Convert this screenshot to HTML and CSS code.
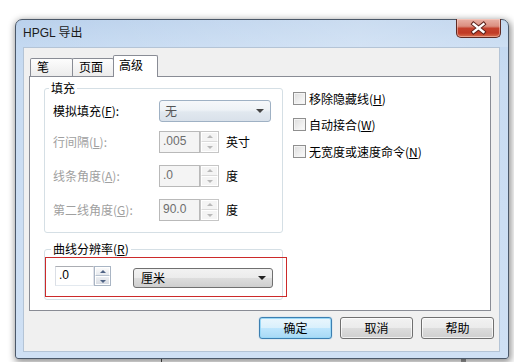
FILE: index.html
```html
<!DOCTYPE html>
<html lang="zh-CN">
<head>
<meta charset="utf-8">
<title>HPGL 导出</title>
<link rel="stylesheet" href="styles.css">
</head>
<body>
<div class="desk-line line-a"></div>
<div class="desk-line line-b"></div>
<div class="window">
  <div class="titlebar">
    <span class="title">HPGL 导出</span>
    <div class="close">
      <svg width="43" height="18" viewBox="0 0 43 18">
        <path d="M16.5 5 L26.5 13 M26.5 5 L16.5 13" stroke="#5e231c" stroke-width="4.2" stroke-linecap="square" fill="none"/>
        <path d="M16.5 5 L26.5 13 M26.5 5 L16.5 13" stroke="#ffffff" stroke-width="2.3" stroke-linecap="square" fill="none"/>
      </svg>
    </div>
  </div>
  <div class="client">
    <div class="tabs">
      <div class="tab t1">笔</div>
      <div class="tab t2">页面</div>
      <div class="tab t3 active">高级</div>
    </div>
    <div class="panel">
      <div class="left">
        <fieldset class="group g1">
          <legend>填充</legend>
          <div class="row r1">
            <span class="lbl">模拟填充(<u>F</u>):</span>
            <div class="combo combo-fill"><span class="ctext">无</span><i class="arrow"></i></div>
          </div>
          <div class="row r2 disabled">
            <span class="lbl">行间隔(<u>L</u>):</span>
            <div class="spin">
              <div class="field">.005</div>
              <div class="spinbtns"><span class="sb up"><i></i></span><span class="sb dn"><i></i></span></div>
            </div>
            <span class="unit">英寸</span>
          </div>
          <div class="row r3 disabled">
            <span class="lbl">线条角度(<u>A</u>):</span>
            <div class="spin">
              <div class="field">.0</div>
              <div class="spinbtns"><span class="sb up"><i></i></span><span class="sb dn"><i></i></span></div>
            </div>
            <span class="unit">度</span>
          </div>
          <div class="row r3 disabled">
            <span class="lbl">第二线角度(<u>G</u>):</span>
            <div class="spin">
              <div class="field">90.0</div>
              <div class="spinbtns"><span class="sb up"><i></i></span><span class="sb dn"><i></i></span></div>
            </div>
            <span class="unit">度</span>
          </div>
        </fieldset>
        <fieldset class="group g2">
          <legend>曲线分辨率(<u>R</u>)</legend>
          <div class="row res">
            <div class="spin small">
              <div class="field">.0</div>
              <div class="spinbtns"><span class="sb up"><i></i></span><span class="sb dn"><i></i></span></div>
            </div>
            <div class="combo combo-unit"><span class="ctext">厘米</span><i class="arrow"></i></div>
          </div>
        </fieldset>
      </div>
      <div class="checks">
        <div class="check c1"><span class="box"></span><span>移除隐藏线(<u>H</u>)</span></div>
        <div class="check c2"><span class="box"></span><span>自动接合(<u>W</u>)</span></div>
        <div class="check c3"><span class="box"></span><span>无宽度或速度命令(<u>N</u>)</span></div>
      </div>
      <div class="annot"></div>
    </div>
    <div class="buttons">
      <div class="btn default">确定</div>
      <div class="btn">取消</div>
      <div class="btn">帮助</div>
    </div>
  </div>
</div>
</body>
</html>
```
FILE: styles.css
```css
* { box-sizing: border-box; }
html, body { margin: 0; padding: 0; }
body {
  width: 514px;
  height: 362px;
  background: #ffffff;
  position: relative;
  overflow: hidden;
  font-family: "Liberation Sans", "Noto Sans CJK SC", sans-serif;
  font-size: 12px;
  color: #000;
}
u { text-decoration: underline; text-underline-offset: 1px; }

.desk-line { position: absolute; top: 330px; height: 32px; }
.line-a { left: 161px; width: 1px; background: #4a4a4a; }
.line-b { left: 461px; width: 5px; background: #9a9a9a; }

.window {
  position: absolute;
  left: 15px;
  top: 19px;
  width: 494px;
  height: 340px;
  border: 1px solid #4b5869;
  border-radius: 7px 7px 3px 3px;
  background: linear-gradient(180deg, #bad1ec 0px, #c4d9f1 26px, #c9dcf2 60px, #cfe0f4 100%);
  box-shadow: 1px 2px 7px 1px rgba(0,0,0,0.45);
  padding: 0 8px 6px 7px;
  display: flex;
  flex-direction: column;
}

.titlebar {
  position: relative;
  height: 27px;
  display: flex;
  align-items: center;
  border-radius: 6px 6px 0 0;
  background: linear-gradient(90deg, rgba(255,255,255,0) 0%, rgba(255,255,255,0.25) 70%, rgba(255,255,255,0.15) 100%);
  margin: 0 -8px 0 -7px;
  padding-left: 7px;
}
.title {
  font-family: "Liberation Sans", "Noto Sans CJK SC", sans-serif;
  font-size: 12px;
  line-height: 14px;
  color: #1b1b1b;
  margin-top: -1px;
}
.close {
  position: absolute;
  top: -1px;
  right: 7px;
  width: 45px;
  height: 19px;
  border: 1px solid #5e2a24;
  border-top: none;
  border-radius: 0 0 5px 5px;
  background: linear-gradient(180deg, #e9b2a6 0%, #db8f80 40%, #c4412c 52%, #c13b26 78%, #d9704f 100%);
  box-shadow: inset 0 0 0 1px rgba(255,220,210,0.45);
}
.close svg { display: block; margin-left: 0; }

.client {
  flex: 1;
  background: #f0f0f0;
  border: 1px solid #b4c4d6;
  padding: 7px 0 0 0;
  display: flex;
  flex-direction: column;
}

.tabs {
  display: flex;
  align-items: flex-end;
  height: 21px;
  margin-left: 6px;
  position: relative;
  z-index: 2;
}
.tab {
  height: 18px;
  border: 1px solid #898c95;
  border-bottom: none;
  border-radius: 2px 2px 0 0;
  background: linear-gradient(180deg, #fdfdfd 0%, #ececec 100%);
  margin-right: -1px;
  line-height: 16px;
  padding-left: 6px;
  font-family: "Noto Sans CJK SC", sans-serif;
  font-size: 12px;
}
.t1 { width: 43px; }
.t2 { width: 42px; }
.t3 { width: 45px; padding-left: 5px; }
.tab.active {
  height: 22px;
  background: #ffffff;
  margin-bottom: -1px;
  line-height: 18px;
}

.panel {
  position: relative;
  z-index: 1;
  margin-left: 5px;
  width: 462px;
  height: 235px;
  border: 1px solid #898c95;
  background: #ffffff;
  padding: 4px 0 0 14px;
  display: grid;
  grid-template-columns: 239px auto;
  column-gap: 10px;
  align-items: start;
}

.left { display: flex; flex-direction: column; }

.group {
  margin: 0;
  border: 1px solid #d5dfe5;
  border-radius: 3px;
  min-width: 0;
  width: 239px;
}
.group legend {
  padding: 0 2px;
  margin-left: -4px;
  line-height: 14px;
  height: 14px;
  font-family: "Noto Sans CJK SC", sans-serif;
  font-size: 12px;
}
.g1 { padding: 5px 0 11px 8px; }
.g2 { padding: 9px 0 12px 10px; margin-top: 9px; }

.row { display: flex; align-items: center; height: 22px; }
.row.r2 { margin-top: 9px; }
.row.r3 { margin-top: 12px; }
.lbl {
  width: 106px;
  font-family: "Noto Sans CJK SC", sans-serif;
  line-height: 14px;
}
.disabled .lbl { color: #a0a0a0; }
.unit { margin-left: 7px; font-family: "Noto Sans CJK SC", sans-serif; line-height: 14px; }

.combo {
  position: relative;
  border-radius: 3px;
  display: flex;
  align-items: center;
}
.combo-fill {
  width: 112px;
  height: 22px;
  border: 1px solid #9fb1c4;
  background: linear-gradient(180deg, #f6f8fa 0%, #eef2f6 45%, #e1e8ef 55%, #d9e1ea 100%);
  padding-left: 5px;
}
.combo-fill .ctext { color: #555; font-family: "Noto Sans CJK SC", sans-serif; line-height: 14px; }
.combo-unit {
  width: 140px;
  height: 20px;
  margin-left: 22px;
  margin-top: 3px;
  border: 1px solid #707070;
  background: linear-gradient(180deg, #f2f2f2 0%, #ebebeb 50%, #dddddd 51%, #cfcfcf 100%);
  padding-left: 7px;
}
.combo-unit .ctext { font-family: "Noto Sans CJK SC", sans-serif; line-height: 14px; }
.arrow {
  position: absolute;
  right: 6px;
  top: 50%;
  margin-top: -2px;
  width: 0; height: 0;
  border-left: 4px solid transparent;
  border-right: 4px solid transparent;
  border-top: 4px solid #222;
}
.combo-fill .arrow { border-top-color: #444; }

.spin { display: flex; height: 22px; }
.spin .field {
  width: 41px;
  height: 22px;
  border: 1px solid #b9b9b9;
  background: #f4f4f4;
  color: #6d6d6d;
  padding: 2px 0 0 3px;
  line-height: 14px;
  font-family: "Liberation Sans", sans-serif;
}
.spinbtns {
  width: 19px;
  height: 22px;
  display: flex;
  flex-direction: column;
  border: 1px solid #c6c6c6;
  background: #f4f4f4;
}
.sb { flex: 1; position: relative; border: 1px solid #ffffff; }
.sb.up { border-bottom: 1px solid #dadada; }
.sb i {
  position: absolute;
  left: 50%;
  top: 50%;
  width: 0; height: 0;
  margin-left: -3px;
  border-left: 3px solid transparent;
  border-right: 3px solid transparent;
}
.sb.up i { border-bottom: 3px solid #b8b8b8; margin-top: -2px; }
.sb.dn i { border-top: 3px solid #b8b8b8; margin-top: -1px; }

.spin.small { height: 20px; }
.spin.small .field {
  width: 39px;
  height: 20px;
  background: #ffffff;
  color: #000;
  border-color: #abadb3 #e2e3ea #e3e9ef #dbdfe6;
  padding-top: 1px;
}
.spin.small .spinbtns {
  width: 17px;
  height: 20px;
  margin-left: 0;
  border-color: #a9b5c4;
  background: linear-gradient(180deg, #f6f6f6, #dedede);
}
.spin.small .sb.up { border-bottom-color: #b8c3d1; background: linear-gradient(180deg, #fafafa, #e6e9ee); }
.spin.small .sb.dn { background: linear-gradient(180deg, #eceef2, #d8dce3); }
.spin.small .sb.up i { border-bottom-color: #4f6384; }
.spin.small .sb.dn i { border-top-color: #4f6384; }

.checks {
  margin-top: 11px;
  display: grid;
  grid-template-rows: 26px 27px 26px;
}
.check {
  display: flex;
  align-items: flex-start;
  gap: 3px;
  font-family: "Noto Sans CJK SC", sans-serif;
  line-height: 13px;
}
.box {
  width: 13px;
  height: 13px;
  border: 1px solid #8f8f8f;
  background: linear-gradient(135deg, #dcdcdc 0%, #f0f0f0 60%, #fbfbfb 100%);
  box-shadow: inset 0 0 0 1px #f4f4f4;
  flex: none;
}

.annot {
  position: absolute;
  left: 15px;
  top: 180px;
  width: 242px;
  height: 40px;
  border: 1px solid #cc2a2a;
}

.buttons {
  display: flex;
  justify-content: flex-end;
  gap: 8px;
  margin-top: 6px;
  padding-right: 5px;
}
.btn {
  width: 73px;
  height: 22px;
  border: 1px solid #707070;
  border-radius: 3px;
  background: linear-gradient(180deg, #f2f2f2 0%, #ebebeb 50%, #dddddd 51%, #cfcfcf 100%);
  box-shadow: inset 0 0 0 1px rgba(255,255,255,0.7);
  display: flex;
  align-items: center;
  justify-content: center;
  font-family: "Noto Sans CJK SC", sans-serif;
  line-height: 14px;
}
.btn.default {
  border-color: #3c7fb1;
  background: linear-gradient(180deg, #eaf6fd 0%, #d9f0fc 50%, #bee6fd 51%, #a7d9f5 100%);
  box-shadow: inset 0 0 0 1px #9ad8f7, 0 0 1px #48a0dc;
}
```
